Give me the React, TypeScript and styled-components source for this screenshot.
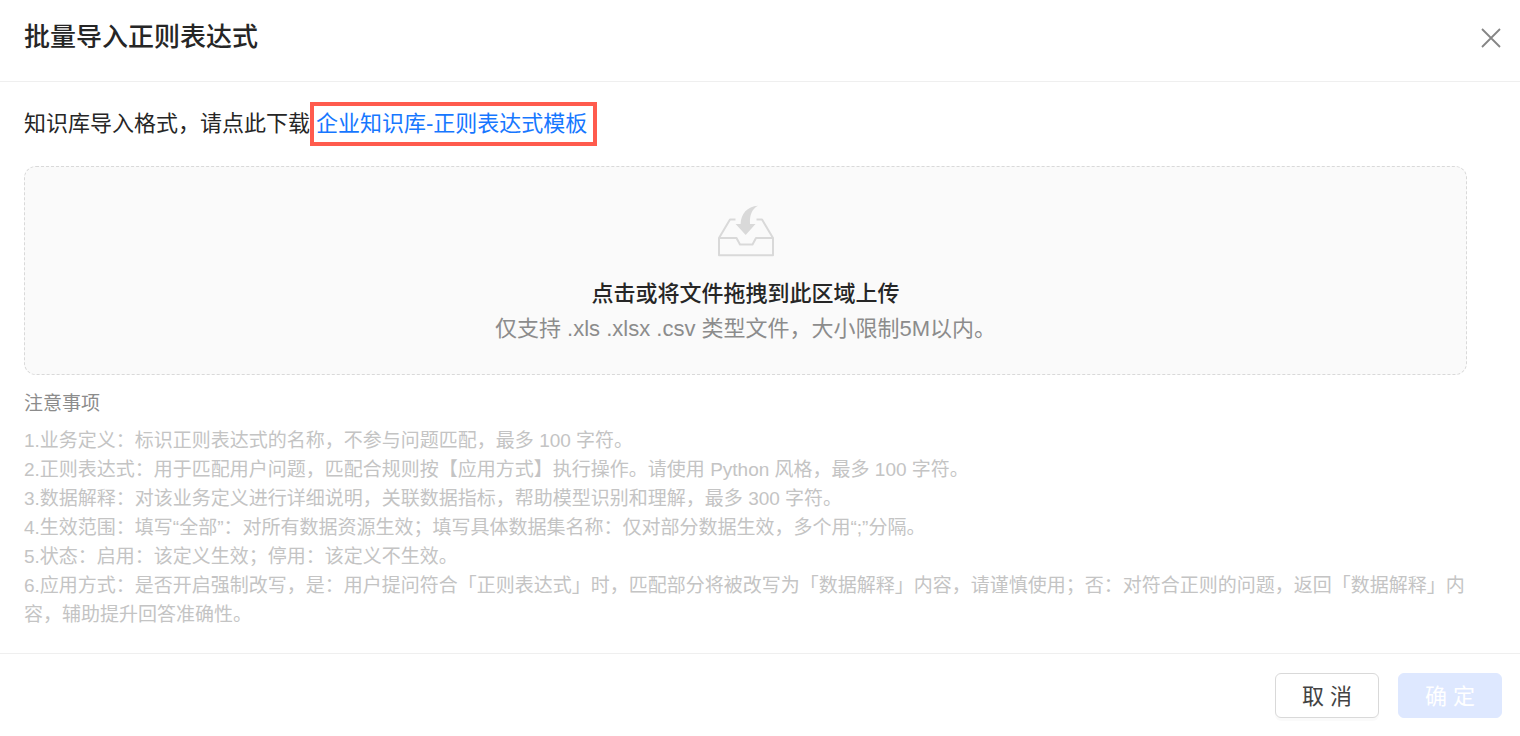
import React from 'react';
import styled, { createGlobalStyle } from 'styled-components';

const Global = createGlobalStyle`
  * { box-sizing: border-box; }
  body {
    margin: 0;
    background: #fff;
    font-family: "Liberation Sans", "Noto Sans CJK SC", sans-serif;
    color: #262626;
  }
`;

const Dialog = styled.section`
  display: flex;
  flex-direction: column;
  min-height: 100vh;
`;

const Header = styled.header`
  display: flex;
  align-items: center;
  justify-content: space-between;
  padding: 17px 19px 23px 24px;
  border-bottom: 1px solid #efefef;
`;

const Title = styled.h1`
  margin: 0;
  font-size: 26px;
  line-height: 41px;
  font-weight: 500;
`;

const CloseButton = styled.button`
  display: flex;
  padding: 0;
  border: 0;
  background: none;
  cursor: pointer;
`;

const Body = styled.main`
  flex: 1;
  padding: 24px 24px 20px;
`;

const Intro = styled.p`
  display: flex;
  align-items: center;
  gap: 4px;
  margin: 0 0 24px;
  font-size: 22px;
  line-height: 36px;
`;

const TemplateLink = styled.a`
  padding: 0 6px 0 2px;
  outline: 4px solid #ff5b4d;
  color: #1677ff;
  text-decoration: none;
`;

const DropZone = styled.label`
  display: flex;
  flex-direction: column;
  align-items: center;
  margin-right: 29px;
  padding: 38px 24px 28px;
  border: 1px dashed #d9d9d9;
  border-radius: 12px;
  background: #fafafa;
  cursor: pointer;
`;

const FileInput = styled.input`
  position: absolute;
  width: 1px;
  height: 1px;
  opacity: 0;
`;

const DropTitle = styled.span`
  margin-top: 19px;
  font-size: 22px;
  line-height: 35px;
  font-weight: 500;
`;

const DropHint = styled.span`
  font-size: 22px;
  line-height: 35px;
  color: #8c8c8c;
`;

const NotesTitle = styled.h2`
  margin: 14px 0 7px;
  font-size: 19px;
  line-height: 30px;
  font-weight: 400;
  color: #8c8c8c;
`;

const Note = styled.p`
  margin: 0;
  font-size: 19px;
  line-height: 29px;
  color: #c4c4c4;
`;

const Footer = styled.footer`
  display: flex;
  justify-content: flex-end;
  gap: 19px;
  padding: 19px 18px 18px;
  border-top: 1px solid #efefef;
`;

const Button = styled.button<{ $primary?: boolean }>`
  width: 104px;
  height: 45px;
  padding: 0 0 4px;
  border: 1px solid ${(p) => (p.$primary ? '#dee8ff' : '#d9d9d9')};
  border-radius: 6px;
  background: ${(p) => (p.$primary ? '#dee8ff' : '#fff')};
  box-shadow: ${(p) => (p.$primary ? 'none' : '0 3px 0 rgba(0, 0, 0, 0.02)')};
  color: ${(p) => (p.$primary ? '#fff' : '#434343')};
  font-family: inherit;
  font-size: 22px;
`;

const notes = [
  '1.业务定义：标识正则表达式的名称，不参与问题匹配，最多 100 字符。',
  '2.正则表达式：用于匹配用户问题，匹配合规则按【应用方式】执行操作。请使用 Python 风格，最多 100 字符。',
  '3.数据解释：对该业务定义进行详细说明，关联数据指标，帮助模型识别和理解，最多 300 字符。',
  '4.生效范围：填写“全部”：对所有数据资源生效；填写具体数据集名称：仅对部分数据生效，多个用“;”分隔。',
  '5.状态：启用：该定义生效；停用：该定义不生效。',
  '6.应用方式：是否开启强制改写，是：用户提问符合「正则表达式」时，匹配部分将被改写为「数据解释」内容，请谨慎使用；否：对符合正则的问题，返回「数据解释」内容，辅助提升回答准确性。',
];

const CloseIcon = () => (
  <svg width="20" height="20" viewBox="0 0 20 20" fill="none" stroke="#858585" strokeWidth="1.8">
    <path d="M1 1 19 19M19 1 1 19" />
  </svg>
);

const InboxIcon = () => (
  <svg width="58" height="52" viewBox="0 0 58 52" fill="none" stroke="#d9d9d9" strokeWidth="2" strokeLinejoin="round">
    <path d="M18.5 14.5H13L2 33V50.2H56V33L45 14.5H39.5" />
    <path d="M2 33H19.5L23 39.5H35.5L39 33H56" />
    <path d="M41 .8C30 1.500 24 9 23.600 19H18.600L28.700 30 38.500 19H33C32.500 10 35 4 41 .8Z" fill="#d9d9d9" stroke="none" />
  </svg>
);

export default function App() {
  return (
    <>
      <Global />
      <Dialog role="dialog" aria-labelledby="dialog-title">
        <Header>
          <Title id="dialog-title">批量导入正则表达式</Title>
          <CloseButton type="button" aria-label="关闭"><CloseIcon /></CloseButton>
        </Header>
        <Body>
          <Intro>
            知识库导入格式，请点此下载
            <TemplateLink href="#template">企业知识库-正则表达式模板</TemplateLink>
          </Intro>
          <DropZone>
            <FileInput type="file" accept=".xls,.xlsx,.csv" />
            <InboxIcon />
            <DropTitle>点击或将文件拖拽到此区域上传</DropTitle>
            <DropHint>仅支持 .xls .xlsx .csv 类型文件，大小限制5M以内。</DropHint>
          </DropZone>
          <NotesTitle>注意事项</NotesTitle>
          {notes.map((note) => <Note key={note}>{note}</Note>)}
        </Body>
        <Footer>
          <Button type="button">取 消</Button>
          <Button type="button" $primary disabled>确 定</Button>
        </Footer>
      </Dialog>
    </>
  );
}
